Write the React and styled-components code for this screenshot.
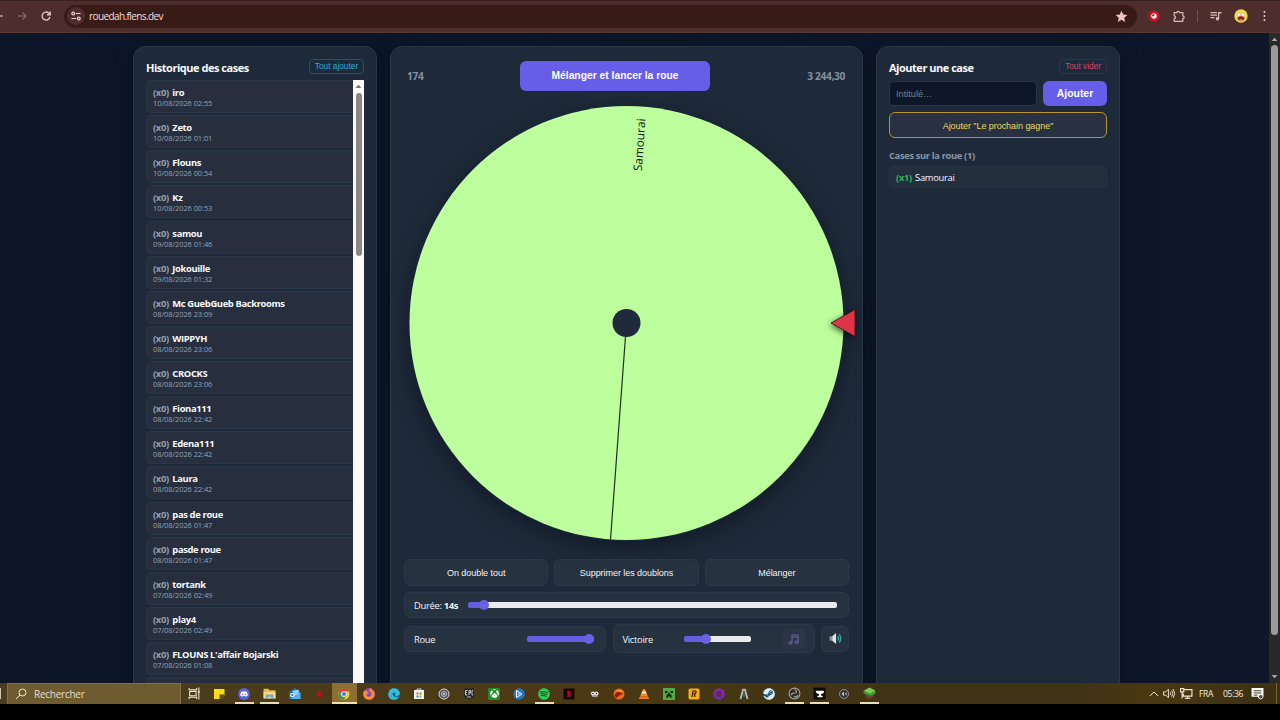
import { useState } from "react";
import styled, { createGlobalStyle, css } from "styled-components";
import {
  FaDiscord,
  FaEdge,
  FaFirefoxBrowser,
  FaSpotify,
  FaSteam,
  FaXbox,
} from "react-icons/fa";

const HISTORY = [
  ["iro", "10/08/2026 02:55"],
  ["Zeto", "10/08/2026 01:01"],
  ["Flouns", "10/08/2026 00:54"],
  ["Kz", "10/08/2026 00:53"],
  ["samou", "09/08/2026 01:46"],
  ["Jokouille", "09/08/2026 01:32"],
  ["Mc GuebGueb Backrooms", "08/08/2026 23:09"],
  ["WIPPYH", "08/08/2026 23:06"],
  ["CROCKS", "08/08/2026 23:06"],
  ["Fiona111", "08/08/2026 22:42"],
  ["Edena111", "08/08/2026 22:42"],
  ["Laura", "08/08/2026 22:42"],
  ["pas de roue", "08/08/2026 01:47"],
  ["pasde roue", "08/08/2026 01:47"],
  ["tortank", "07/08/2026 02:49"],
  ["play4", "07/08/2026 02:49"],
  ["FLOUNS L'affair Bojarski", "07/08/2026 01:08"],
];

const Svg = ({ size = 12, children, ...rest }) => (
  <svg width={size} height={size} viewBox="0 0 24 24" fill="none" {...rest}>
    {children}
  </svg>
);

const RoundIcon = styled.span`
  width: 12px;
  height: 12px;
  display: flex;
  align-items: center;
  justify-content: center;
  border-radius: 50%;
  background: ${(props) => props.$bg};
`;

const SquareIcon = styled(RoundIcon)`
  border-radius: 1px;
`;

// Barre du navigateur
const BrowserBar = () => (
  <Toolbar>
    <NavIcons>
      <Svg size={12} stroke="#d8bcb8" strokeWidth="2.4">
        <path d="M14 12h8" />
      </Svg>
      <Svg size={12} stroke="#8f6d69" strokeWidth="2.2">
        <path d="M4 12h15M13 5l7 7-7 7" />
      </Svg>
      <Svg size={12} stroke="#e3c9c5" strokeWidth="2.6">
        <path d="M20 14a8 8 0 1 1-2.5-8L20 8.5M20.5 3v6.5H14" />
      </Svg>
    </NavIcons>
    <UrlBar>
      <SiteInfo>
        <Svg size={12} stroke="#e8d3d0" strokeWidth="2.4">
          <circle cx="6.5" cy="7" r="2.8" />
          <path d="M12 7h9M3 17h9" />
          <circle cx="17.5" cy="17" r="2.8" />
        </Svg>
      </SiteInfo>
      <Url>rouedah.flens.dev</Url>
      <Svg size={13} fill="#ecc3bf">
        <path d="M12 1.5l3.2 7 7.6.8-5.7 5.1 1.6 7.6-6.7-3.9L5.3 22l1.6-7.6L1.2 9.3l7.6-.8z" />
      </Svg>
    </UrlBar>
    <Extensions>
      <Svg size={12}>
        <circle cx="12" cy="12" r="11" fill="#d00f24" />
        <circle cx="12" cy="12" r="5.5" fill="#fff" />
        <path d="M8 13a4 4 0 0 1 5-5l-1 4z" fill="#c21625" />
      </Svg>
      <Svg size={13} stroke="#d9b8b4" strokeWidth="2.2">
        <path d="M4 5h5a2.5 2.5 0 0 1 5 0h6v6a2.5 2.5 0 0 1 0 5v5H4v-5a2.5 2.5 0 0 0 0-5z" />
      </Svg>
      <Separator />
      <Svg size={12} fill="#d9b8b4">
        <path d="M1 4h13v2.5H1zM1 9h13v2.5H1zM1 14h8v2.5H1zM16 4h7v3h-4.5v10.5a3.5 3.5 0 1 1-2.5-3.4z" />
      </Svg>
      <Svg size={14}>
        <circle cx="12" cy="12" r="11.5" fill="#e9dc4c" />
        <path d="M3 10c3-4 15-4 18 0l-2 6H5z" fill="#f0c08c" />
        <circle cx="8" cy="10" r="2" fill="#fff" />
        <circle cx="16" cy="10" r="2" fill="#fff" />
        <path d="M6 15q6-5 12 0c0 8-12 8-12 0z" fill="#8d2424" />
        <path d="M9 18h6v2.5H9z" fill="#e59a92" />
      </Svg>
      <Svg size={12} fill="#e3c9c5">
        <circle cx="9" cy="4" r="2" />
        <circle cx="9" cy="12" r="2" />
        <circle cx="9" cy="20" r="2" />
      </Svg>
    </Extensions>
  </Toolbar>
);

const HistoryPanel = () => (
  <Panel>
    <PanelHeader>
      <PanelTitle>Historique des cases</PanelTitle>
      <SmallButton $color="#2fa9d6" $border="#24506a" $width={55}>
        Tout ajouter
      </SmallButton>
    </PanelHeader>
    <HistoryBody>
      <HistoryList>
        {HISTORY.map(([name, date]) => (
          <HistoryItem key={name}>
            <ItemName>
              <Count>(x0)</Count> {name}
            </ItemName>
            <ItemDate>{date}</ItemDate>
          </HistoryItem>
        ))}
        <HistoryItem />
      </HistoryList>
      <ListScroll>
        <Svg size={7} fill="#777">
          <path d="M2 17l10-11 10 11z" />
        </Svg>
        <ListThumb />
      </ListScroll>
    </HistoryBody>
  </Panel>
);

const Wheel = () => (
  <WheelBox>
    <WheelSvg viewBox="0 0 435 435">
      <circle cx="217.5" cy="217" r="217" fill="#bdff9d" />
      <path d="M217.5 217L201.5 433.5" stroke="#20301f" strokeWidth="1.2" />
      <WheelLabel
        transform="rotate(-85.8 217.5 217.5)"
        x="423"
        y="221.5"
        textAnchor="end"
      >
        Samourai
      </WheelLabel>
      <circle cx="217.5" cy="217" r="14" fill="#1f2a3b" />
    </WheelSvg>
    <Pointer viewBox="0 0 26 30">
      <path d="M1 15L25 1.5V28.5z" fill="#dd3446" stroke="#2c1420" strokeWidth=".8" />
    </Pointer>
  </WheelBox>
);

const Slider = ({ value, onChange, ...rest }) => (
  <Range
    type="range"
    min="0"
    max="100"
    value={value}
    onChange={(e) => onChange(Number(e.target.value))}
    style={{ "--fill": `${value}%` }}
    {...rest}
  />
);

const WheelPanel = () => {
  const [duration, setDuration] = useState(3);
  const [wheelVolume, setWheelVolume] = useState(100);
  const [winVolume, setWinVolume] = useState(30);

  return (
    <CenterPanel>
      <LaunchRow>
        <Stat>174</Stat>
        <LaunchButton>Mélanger et lancer la roue</LaunchButton>
        <Stat $right>3 244,30</Stat>
      </LaunchRow>
      <Wheel />
      <ActionRow>
        <ActionButton>On double tout</ActionButton>
        <ActionButton>Supprimer les doublons</ActionButton>
        <ActionButton>Mélanger</ActionButton>
      </ActionRow>
      <DurationBox>
        <Label $width={44}>
          Durée: <b>14s</b>
        </Label>
        <Slider value={duration} onChange={setDuration} $width={369} />
      </DurationBox>
      <VolumeRow>
        <VolumeBox>
          <Label>Roue</Label>
          <Slider value={wheelVolume} onChange={setWheelVolume} $width={67} />
        </VolumeBox>
        <VolumeBox $tall>
          <Label $width={61}>Victoire</Label>
          <Slider value={winVolume} onChange={setWinVolume} $width={67} />
          <MusicButton>
            <Svg size={12} stroke="#66619d" strokeWidth="2.4">
              <path d="M8 19V4h12v14M8 8h12" />
              <ellipse cx="5" cy="19.5" rx="3" ry="2.2" />
              <ellipse cx="17" cy="18.5" rx="3" ry="2.2" />
            </Svg>
          </MusicButton>
        </VolumeBox>
        <MuteButton>
          <Svg size={13}>
            <path d="M1 8h5v8H1z" fill="#8b969e" />
            <path d="M6 8l7-6v20l-7-6z" fill="#e1e6e8" />
            <path d="M16 8q3 4 0 8M19 4.5q5 7.5 0 15" stroke="#31b5aa" strokeWidth="2.4" />
          </Svg>
        </MuteButton>
      </VolumeRow>
    </CenterPanel>
  );
};

const AddPanel = () => {
  const [title, setTitle] = useState("");

  return (
    <Panel>
      <PanelHeader>
        <PanelTitle>Ajouter une case</PanelTitle>
        <SmallButton $color="#d84563" $border="#38303f" $width={48}>
          Tout vider
        </SmallButton>
      </PanelHeader>
      <AddRow>
        <Input
          placeholder="Intitulé…"
          value={title}
          onChange={(e) => setTitle(e.target.value)}
        />
        <AddButton>Ajouter</AddButton>
      </AddRow>
      <NextButton>Ajouter "Le prochain gagne"</NextButton>
      <ListTitle>Cases sur la roue (1)</ListTitle>
      <WheelItem>
        <b>(x1)</b> Samourai
      </WheelItem>
    </Panel>
  );
};

const TASKS = [
  {
    id: "tasks",
    icon: (
      <Svg size={13} stroke="#eee3cf" strokeWidth="2">
        <path d="M2 2v3h14V2M2 22v-3h14v3M3 8h12v8H3zM20 1v22M18 9h4" />
      </Svg>
    ),
  },
  {
    id: "notes",
    icon: (
      <Svg>
        <path d="M2 2h21v14l-6 6H2z" fill="#f8df17" />
        <path d="M13 13h10v3l-6 6h-4z" fill="#5b4a0c" />
      </Svg>
    ),
  },
  {
    id: "discord",
    open: true,
    icon: (
      <RoundIcon $bg="#5a62dc">
        <FaDiscord size={8} color="#fff" />
      </RoundIcon>
    ),
  },
  {
    id: "explorer",
    open: true,
    icon: (
      <Svg size={13}>
        <path d="M1 3h9l2 3h11v15H1z" fill="#e6b84a" />
        <path d="M1 9h22v12H1z" fill="#f8dc83" />
        <path d="M5 22v-8h14v8h-4v-4H9v4z" fill="#6fa7c9" />
      </Svg>
    ),
  },
  {
    id: "outlook",
    icon: (
      <Svg size={13}>
        <path d="M2 9l11-7 10 7v13H2z" fill="#1d73c2" />
        <path d="M8 7l12-2v8l-8 4z" fill="#8fd0f5" />
        <path d="M4 22l19-12v12z" fill="#4cb4ee" />
        <circle cx="8" cy="15" r="3" stroke="#fff" strokeWidth="2" />
      </Svg>
    ),
  },
  {
    id: "red",
    icon: (
      <Svg>
        <path d="M8 5h4v4l5-1v10H8z" fill="#b5121e" />
      </Svg>
    ),
  },
  {
    id: "chrome",
    open: true,
    active: true,
    icon: (
      <Svg>
        <circle cx="12" cy="12" r="11" fill="#f6c62e" />
        <path d="M2.5 6.5A11 11 0 0 1 21.5 6.5H12a5.5 5.5 0 0 0-5 7.5z" fill="#df3b31" />
        <path d="M2.5 6.5A11 11 0 0 0 12 23l5-8.5a5.5 5.5 0 0 1-10 0z" fill="#29a352" />
        <circle cx="12" cy="12" r="5.5" fill="#fff" />
        <circle cx="12" cy="12" r="4.2" fill="#3c7fe8" />
      </Svg>
    ),
  },
  {
    id: "firefox",
    icon: (
      <RoundIcon $bg="#7c4bb8">
        <FaFirefoxBrowser size={12} color="#ff8a36" />
      </RoundIcon>
    ),
  },
  {
    id: "edge",
    icon: (
      <RoundIcon $bg="#1763a9">
        <FaEdge size={12} color="#38bfd1" />
      </RoundIcon>
    ),
  },
  {
    id: "store",
    icon: (
      <Svg>
        <path d="M8 5V2h8v3" stroke="#b9d5e0" strokeWidth="2" />
        <path d="M2 4h20v18H2z" fill="#eef3f1" />
        <path d="M7 9h4v4H7z" fill="#d9693f" />
        <path d="M13 9h4v4h-4z" fill="#6b9e3d" />
        <path d="M7 15h4v4H7z" fill="#398ac0" />
        <path d="M13 15h4v4h-4z" fill="#d0a536" />
      </Svg>
    ),
  },
  {
    id: "swirl",
    icon: (
      <Svg>
        <circle cx="12" cy="12" r="10" fill="#514b60" stroke="#ddd8df" strokeWidth="2" />
        <circle cx="12" cy="12" r="5" stroke="#c9c5d4" strokeWidth="2" />
        <circle cx="12" cy="12" r="2" fill="#f0eaf4" />
      </Svg>
    ),
  },
  {
    id: "epic",
    icon: (
      <Svg>
        <path d="M2 1h20v18l-10 4-10-4z" fill="#262729" />
        <path
          d="M9 5H5v9h4M5 9h3M12 14V5h3v5h-3M20 5h-2v9h2M8 18h8"
          stroke="#e7e7e7"
          strokeWidth="1.6"
        />
      </Svg>
    ),
  },
  {
    id: "xbox",
    icon: (
      <SquareIcon $bg="#23872c">
        <FaXbox size={9} color="#f2fff0" />
      </SquareIcon>
    ),
  },
  {
    id: "player",
    icon: (
      <Svg>
        <circle cx="12" cy="12" r="11.5" fill="#2474c9" />
        <path d="M7 5l11 7-11 7z" stroke="#fff" strokeWidth="2" />
        <circle cx="12" cy="12" r="3" fill="#79b8f3" />
      </Svg>
    ),
  },
  { id: "spotify", open: true, icon: <FaSpotify size={12} color="#1ed45f" /> },
  {
    id: "netflix",
    icon: (
      <Svg>
        <path d="M1 1h22v22H1z" fill="#170608" />
        <path d="M10 5v14M14 5v14M10 5l4 14" stroke="#a8141f" strokeWidth="2.4" />
      </Svg>
    ),
  },
  {
    id: "mask",
    icon: (
      <Svg>
        <path d="M2 5l5 2h11l4 2-1 7-6 4-8-2z" fill="#5a5146" />
        <circle cx="10" cy="11" r="4" fill="#efe9df" />
        <circle cx="17" cy="11" r="4" fill="#efe9df" />
        <circle cx="10" cy="11" r="1.3" fill="#111" />
        <circle cx="17" cy="11" r="1.3" fill="#111" />
        <path d="M8 16h11" stroke="#ddd4c8" strokeWidth="2" />
      </Svg>
    ),
  },
  {
    id: "orange",
    icon: (
      <Svg>
        <circle cx="12" cy="12" r="11" fill="#ea6a1a" />
        <path d="M3 15c3-9 10-9 18-3-6-1-8 4-15 8z" fill="#8d1f12" />
        <path d="M6 7c4-4 10-4 14 1-5-2-9-2-14-1z" fill="#ffa63b" />
      </Svg>
    ),
  },
  {
    id: "vlc",
    icon: (
      <Svg>
        <path d="M10 2h4l6 15H4z" fill="#f08a22" />
        <path d="M8.5 7h7l1.5 4H7z" fill="#f9ece1" />
        <path d="M4 17h16l3 5H1z" fill="#e97919" />
      </Svg>
    ),
  },
  {
    id: "creeper",
    icon: (
      <Svg>
        <path d="M0 0h24v24H0z" fill="#51a949" />
        <path d="M4 6h5v4H4zM15 6h5v4h-5zM10 10h4v3h3v7h-3v-3h-4v3H7v-7h3z" fill="#12240f" />
      </Svg>
    ),
  },
  {
    id: "rockstar",
    icon: (
      <Svg>
        <rect x="1" y="1" width="22" height="22" rx="3" fill="#f6ad18" />
        <path d="M8 18l2-12h4q3 0 2 3t-5 3M13 12l1 6" stroke="#2c1b05" strokeWidth="2.4" />
      </Svg>
    ),
  },
  {
    id: "ring",
    icon: (
      <Svg>
        <circle cx="12" cy="12" r="9" fill="#5b2a63" stroke="#8a26a8" strokeWidth="5" />
        <path d="M5 18a9 9 0 0 0 14 0" stroke="#4d3abd" strokeWidth="3" />
      </Svg>
    ),
  },
  {
    id: "lambda",
    icon: (
      <Svg>
        <path d="M5 22L10 3h4l5 19" stroke="#b2bec4" strokeWidth="3.5" />
        <path d="M12 9v9" stroke="#536877" strokeWidth="3" />
      </Svg>
    ),
  },
  {
    id: "steam",
    icon: (
      <RoundIcon $bg="#164b70">
        <FaSteam size={12} color="#dfedf5" />
      </RoundIcon>
    ),
  },
  {
    id: "obs",
    open: true,
    icon: (
      <Svg size={13}>
        <circle cx="12" cy="12" r="10" fill="#2c2a28" stroke="#aaa69b" strokeWidth="2" />
        <path
          d="M12 5a4 4 0 0 1 2 7M6 15a4 4 0 0 1 6-3M18 15a4 4 0 0 1-7 2"
          stroke="#a5a198"
          strokeWidth="2.4"
        />
      </Svg>
    ),
  },
  {
    id: "anvil",
    open: true,
    icon: (
      <Svg size={13}>
        <path d="M1 1h22v22H1z" fill="#0c0b09" />
        <path d="M5 7h15v4l-5 2v3h3v3H8v-3h3v-3c-3 0-6-2-6-6z" fill="#fff" />
      </Svg>
    ),
  },
  {
    id: "vortex",
    icon: (
      <Svg>
        <circle cx="12" cy="12" r="9" fill="#333034" stroke="#8f8b90" strokeWidth="2" />
        <path d="M12 7l-5 5 5 5zM17 8l-3 4 3 4z" fill="#c6c3c8" />
      </Svg>
    ),
  },
  {
    id: "block",
    open: true,
    icon: (
      <Svg size={13}>
        <path d="M12 1l11 6-11 6L1 7z" fill="#75cf50" />
        <path d="M1 7l11 6v4L1 12z" fill="#3d9639" />
        <path d="M4 13l8 4v6l-8-5zM20 12l-8 5v6l8-5z" fill="#684426" />
        <path d="M23 7l-11 6v4l11-5z" fill="#46a739" />
      </Svg>
    ),
  },
];

// Barre des tâches
const Taskbar = () => (
  <TaskbarRow>
    <StartEdge />
    <SearchBox>
      <Svg size={12} stroke="#f0e8d5" strokeWidth="2">
        <circle cx="15" cy="9" r="7" />
        <path d="M10 14l-8 8" />
      </Svg>
      Rechercher
    </SearchBox>
    {TASKS.map((task) => (
      <Task key={task.id} $open={task.open} $active={task.active}>
        {task.icon}
      </Task>
    ))}
    <Tray>
      <Svg size={10} stroke="#f0e8d9" strokeWidth="2.4">
        <path d="M2 17L12 7l10 10" />
      </Svg>
      <Svg size={13} stroke="#eee4d2" strokeWidth="1.8">
        <path d="M1 9h4l5-5v16l-5-5H1zM13 9q2 3 0 6M16 6q4 6 0 12M19 4q5 8 0 16" />
      </Svg>
      <Svg size={13} stroke="#eee4d2" strokeWidth="2.2">
        <path d="M8 5h14v12H6v-5M14 17v4M9 21h10M1 3h6v6H1zM4 9v12" />
      </Svg>
      <TrayText $width={15}>FRA</TrayText>
      <TrayText $width={21}>05:36</TrayText>
      <Svg size={13}>
        <path d="M1 2h22v16h-6v5l-5-5H1z" fill="#fff" />
        <path d="M5 7h14M5 11h14M5 15h7" stroke="#453718" strokeWidth="1.8" />
        <circle cx="18" cy="18" r="4" fill="#55482c" stroke="#fff" strokeWidth="1.5" />
      </Svg>
      <DesktopEdge />
    </Tray>
  </TaskbarRow>
);

export default function App() {
  return (
    <Screen>
      <GlobalStyle />
      <BrowserBar />
      <Page>
        <Columns>
          <HistoryPanel />
          <WheelPanel />
          <AddPanel />
        </Columns>
        <PageScroll>
          <Svg size={7} fill="#aaa9a7">
            <path d="M2 17l10-11 10 11z" />
          </Svg>
          <PageThumb />
          <Svg size={7} fill="#aaa9a7">
            <path d="M2 7l10 11L22 7z" />
          </Svg>
        </PageScroll>
      </Page>
      <Taskbar />
    </Screen>
  );
}

const GlobalStyle = createGlobalStyle`
  * {
    box-sizing: border-box;
  }

  body {
    margin: 0;
    background: #000;
    font-family: "Open Sans", "Noto Sans", sans-serif;
  }

  button, input {
    font-family: "Liberation Sans", Arial, sans-serif;
    margin: 0;
    padding: 0;
  }

  svg {
    flex-shrink: 0;
    display: block;
  }
`;

const Screen = styled.div`
  width: 1280px;
  height: 720px;
  display: flex;
  flex-direction: column;
  overflow: hidden;
  background: #000;
`;

const Toolbar = styled.header`
  height: 33px;
  flex-shrink: 0;
  display: flex;
  align-items: center;
  background: #4e2e2c;
  box-shadow: inset 0 1px #38201f;
  border-bottom: 1px solid #553a37;
`;

const NavIcons = styled.div`
  width: 64px;
  display: flex;
  align-items: center;
  gap: 12px;
  margin-left: -8px;
  margin-right: 8px;
`;

const UrlBar = styled.div`
  width: 1073px;
  height: 23px;
  display: flex;
  align-items: center;
  padding: 0 9px 0 3px;
  border-radius: 12px;
  background: #381a17;
`;

const SiteInfo = styled.div`
  width: 18px;
  height: 18px;
  display: flex;
  align-items: center;
  justify-content: center;
  border-radius: 50%;
  background: #4e2e2c;
`;

const Url = styled.span`
  flex: 1;
  margin-left: 4px;
  color: #f2dfdc;
  font-size: 10px;
  letter-spacing: -0.59px;
`;

const Extensions = styled.div`
  display: flex;
  align-items: center;
  margin-left: 11px;
  gap: 12px;
`;

const Separator = styled.span`
  width: 1px;
  height: 12px;
  background: #70504d;
`;

const Page = styled.main`
  height: 650px;
  flex-shrink: 0;
  display: flex;
  overflow: hidden;
  background: linear-gradient(90deg, #0d1527, #0b1728 50%, #0e1628);
`;

const Columns = styled.div`
  flex: 1;
  display: grid;
  grid-template-columns: 244px 473px 244px;
  gap: 13px;
  padding: 13px 0 0 133px;
`;

const Panel = styled.section`
  height: 660px;
  padding: 12px;
  border: 1px solid #2a3746;
  border-radius: 12px;
  background: #1e2a39;
  box-shadow: 0 5px 20px rgba(0, 0, 0, 0.25);
`;

const CenterPanel = styled(Panel)`
  padding: 13px;
`;

const PanelHeader = styled.div`
  height: 15px;
  display: flex;
  align-items: center;
  justify-content: space-between;
`;

const PanelTitle = styled.h2`
  margin: 2px 0 0;
  color: #f8fafc;
  font-size: 11px;
  line-height: 15px;
  font-weight: 700;
  letter-spacing: -0.48px;
  white-space: nowrap;
`;

const SmallButton = styled.button`
  width: ${(props) => props.$width}px;
  height: 15px;
  padding-bottom: 1px;
  border: 1px solid ${(props) => props.$border};
  border-radius: 4px;
  background: #1c2b3b;
  color: ${(props) => props.$color};
  font-size: 8.3px;
  line-height: 12px;
  white-space: nowrap;
`;

const HistoryBody = styled.div`
  height: 603px;
  margin-top: 6px;
  display: flex;
  overflow: hidden;
`;

const HistoryList = styled.div`
  width: 207px;
  display: flex;
  flex-direction: column;
  gap: 2.13px;
`;

const HistoryItem = styled.div`
  height: 33px;
  flex-shrink: 0;
  padding: 6px 6px 0;
  border: 1px solid #2a3545;
  border-right: 0;
  border-radius: 5px 0 0 5px;
  background: #272f3f;
`;

const ItemName = styled.div`
  color: #f8fafc;
  font-size: 9.4px;
  line-height: 12px;
  font-weight: 700;
  letter-spacing: -0.35px;
  white-space: nowrap;
`;

const Count = styled.span`
  margin-right: 1.5px;
  color: #94a0b0;
`;

const ItemDate = styled.div`
  color: #94a0b0;
  font-size: 7.5px;
  line-height: 9px;
  letter-spacing: -0.1px;
`;

const ListScroll = styled.div`
  width: 11px;
  display: flex;
  flex-direction: column;
  align-items: center;
  padding-top: 3px;
  background: #fcfaf9;
`;

const ListThumb = styled.div`
  width: 6px;
  height: 163px;
  margin-top: 3px;
  border-radius: 3px;
  background: #8b8786;
`;

const LaunchRow = styled.div`
  display: flex;
  align-items: center;
  justify-content: space-between;
  height: 31px;
  padding: 0 4px 0 3px;
`;

const Stat = styled.span`
  width: ${(props) => (props.$right ? 135 : 113)}px;
  color: #8390a0;
  font-size: 10.2px;
  font-weight: 700;
  letter-spacing: -0.35px;
  text-align: ${(props) => (props.$right ? "right" : "left")};
`;

const primary = css`
  border: 0;
  border-radius: 6px;
  background: #665de8;
  color: #fff;
  font-weight: 700;
`;

const LaunchButton = styled.button`
  ${primary}
  width: 190px;
  height: 30px;
  font-size: 10.3px;
`;

const WheelBox = styled.div`
  position: relative;
  width: 435px;
  height: 435px;
  margin: 15px 0 0 5px;
  border-radius: 50%;
  box-shadow: 0 6px 20px rgba(5, 10, 25, 0.5);
`;

const WheelSvg = styled.svg`
  width: 435px;
  height: 435px;
`;

const WheelLabel = styled.text`
  fill: #10180d;
  font-family: "Open Sans", sans-serif;
  font-size: 11.8px;
`;

const Pointer = styled.svg`
  position: absolute;
  top: 202px;
  right: -12px;
  width: 26px;
  height: 30px;
  filter: drop-shadow(-1px 2px 3px rgba(0, 0, 0, 0.65));
`;

const box = css`
  border: 1px solid #2c394a;
  border-radius: 6px;
  background: #273241;
  color: #f1f4f7;
`;

const ActionRow = styled.div`
  display: grid;
  grid-template-columns: repeat(3, 1fr);
  gap: 6px;
  margin-top: 18px;
`;

const ActionButton = styled.button`
  ${box}
  height: 27px;
  font-size: 9px;
  letter-spacing: -0.05px;
`;

const DurationBox = styled.div`
  ${box}
  height: 26px;
  margin-top: 6px;
  padding: 0 11px 0 9px;
  display: flex;
  align-items: center;
  justify-content: space-between;
`;

const Label = styled.label`
  width: ${(props) => (props.$width ? `${props.$width}px` : "auto")};
  padding-top: 1px;
  font-size: 9.4px;
  letter-spacing: -0.3px;
  white-space: nowrap;
`;

const Range = styled.input`
  appearance: none;
  width: ${(props) => props.$width}px;
  height: 12px;
  background: transparent;

  &::-webkit-slider-runnable-track {
    height: 6px;
    border-radius: 2px;
    background: linear-gradient(
      90deg,
      #665de0 calc(var(--fill) + 3px),
      #e9ecef calc(var(--fill) + 3px)
    );
  }

  &::-webkit-slider-thumb {
    appearance: none;
    width: 10px;
    height: 10px;
    margin-top: -2px;
    border-radius: 50%;
    background: #6b61e4;
  }
`;

const VolumeRow = styled.div`
  display: grid;
  grid-template-columns: 202px 202px 28px;
  align-items: center;
  column-gap: 6.5px;
  margin-top: 6px;
`;

const VolumeBox = styled.div`
  ${box}
  height: ${(props) => (props.$tall ? 29 : 26)}px;
  padding: 0 ${(props) => (props.$tall ? 9 : 11)}px 0 9px;
  display: flex;
  align-items: center;
  justify-content: space-between;
`;

const MusicButton = styled.button`
  width: 22px;
  height: 20px;
  margin-left: 32px;
  display: flex;
  align-items: center;
  justify-content: center;
  border: 0;
  border-radius: 5px;
  background: #2d3549;
`;

const MuteButton = styled.button`
  ${box}
  height: 26px;
  display: flex;
  align-items: center;
  justify-content: center;
`;

const AddRow = styled.div`
  display: flex;
  gap: 6px;
  margin-top: 7px;
`;

const Input = styled.input`
  width: 148px;
  height: 25px;
  padding: 0 6px;
  border: 1px solid #263648;
  border-radius: 5px;
  background: #0d1727;
  color: #f8fafc;
  font-size: 9.2px;

  &::placeholder {
    color: #77808c;
  }
`;

const AddButton = styled.button`
  ${primary}
  width: 64px;
  height: 25px;
  font-size: 10.4px;
`;

const NextButton = styled.button`
  width: 100%;
  height: 26px;
  margin-top: 6px;
  padding-top: 1px;
  border: 1px solid #b8922f;
  border-radius: 6px;
  background: #273142;
  color: #ead765;
  font-size: 9px;
  letter-spacing: -0.05px;
`;

const ListTitle = styled.h3`
  margin: 10px 0 0;
  color: #8795a6;
  font-size: 9.4px;
  line-height: 15px;
  letter-spacing: -0.36px;
`;

const WheelItem = styled.div`
  height: 22px;
  margin-top: 3px;
  padding-left: 6px;
  border: 1px solid #263343;
  border-radius: 4px;
  background: #242f3e;
  color: #f5f7fa;
  font-size: 9.3px;
  line-height: 22px;
  letter-spacing: -0.26px;

  b {
    margin-right: 1px;
    color: #2db457;
  }
`;

const PageScroll = styled.div`
  width: 11px;
  display: flex;
  flex-direction: column;
  align-items: center;
  padding: 3px 0;
  background: #292929;
`;

const PageThumb = styled.div`
  width: 7px;
  height: 590px;
  margin: 2px 0 auto;
  border-radius: 4px;
  background: #9b9b99;
`;

const TaskbarRow = styled.footer`
  height: 21px;
  flex-shrink: 0;
  display: flex;
  background: linear-gradient(
    90deg,
    #4b3d20,
    #4a3913 45%,
    #403315 70%,
    #403315 84%,
    #493811 90%,
    #3c2f14
  );
`;

const StartEdge = styled.div`
  width: 1px;
  height: 11px;
  margin: 5px 6px 0 0;
  background: #d1c7b2;
`;

const SearchBox = styled.div`
  width: 174px;
  display: flex;
  align-items: center;
  gap: 7px;
  margin-right: 0.5px;
  padding-left: 7px;
  border: 1px solid #81704a;
  border-bottom: 0;
  background: #6e5b30;
  color: #e7ddc8;
  font-size: 10px;
  letter-spacing: -0.25px;
`;

const Task = styled.div`
  width: 25px;
  display: flex;
  align-items: center;
  justify-content: center;
  background: ${(props) => (props.$active ? "#8a7034" : "transparent")};
  box-shadow: ${(props) => (props.$active ? "inset 0 -2px #f2dfaa" : "none")};

  ${(props) =>
    props.$open &&
    !props.$active &&
    css`
      background: linear-gradient(#e9ddba, #e9ddba) center bottom / 19px 2px no-repeat;
    `}
`;

const Tray = styled.div`
  margin-left: auto;
  display: flex;
  align-items: center;
  gap: 4px;
  color: #f4ecdc;
`;

const TrayText = styled.span`
  width: ${(props) => props.$width}px;
  margin: 0 3px 0 2px;
  font-size: 8.6px;
  letter-spacing: -0.35px;
  white-space: nowrap;
`;

const DesktopEdge = styled.span`
  width: 1px;
  height: 21px;
  margin: 0 3px 0 8px;
  background: #746436;
`;
